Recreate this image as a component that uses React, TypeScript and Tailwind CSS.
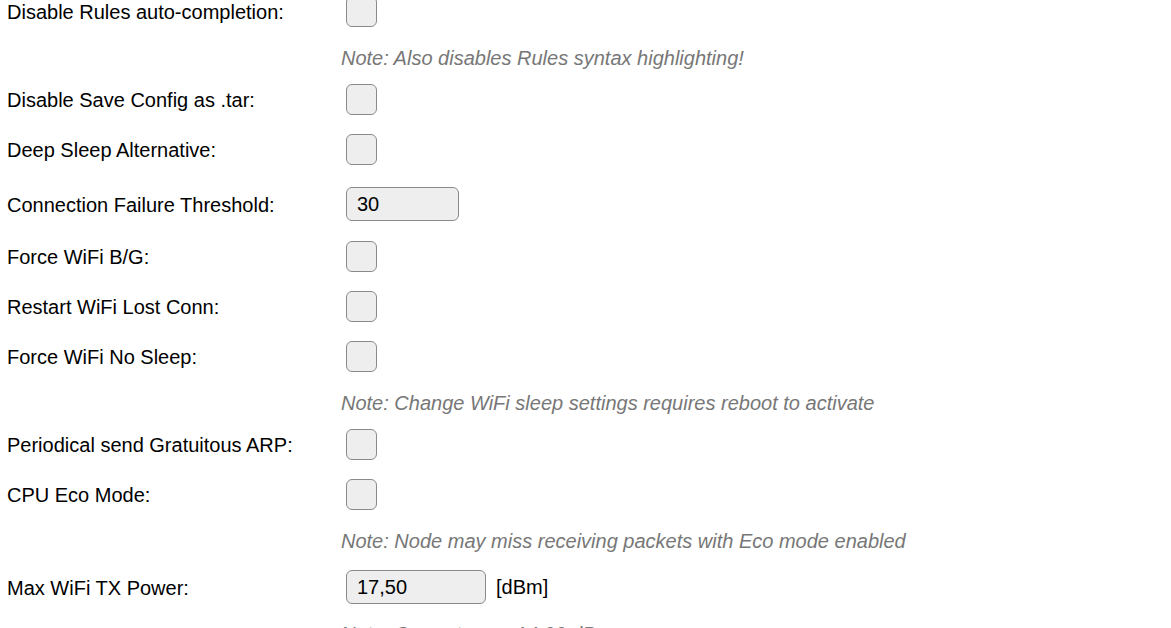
import React from "react";

type Row =
  | { kind: "check"; label: string }
  | { kind: "note"; text: string; tight?: boolean }
  | { kind: "input"; label: string; value: string; width: string; unit?: string };

const rows: Row[] = [
  { kind: "check", label: "Disable Rules auto-completion:" },
  { kind: "note", text: "Note: Also disables Rules syntax highlighting!" },
  { kind: "check", label: "Disable Save Config as .tar:" },
  { kind: "check", label: "Deep Sleep Alternative:" },
  { kind: "input", label: "Connection Failure Threshold:", value: "30", width: "w-[113px]" },
  { kind: "check", label: "Force WiFi B/G:" },
  { kind: "check", label: "Restart WiFi Lost Conn:" },
  { kind: "check", label: "Force WiFi No Sleep:" },
  { kind: "note", text: "Note: Change WiFi sleep settings requires reboot to activate" },
  { kind: "check", label: "Periodical send Gratuitous ARP:" },
  { kind: "check", label: "CPU Eco Mode:" },
  { kind: "note", text: "Note: Node may miss receiving packets with Eco mode enabled" },
  { kind: "input", label: "Max WiFi TX Power:", value: "17,50", width: "w-[140px]", unit: "[dBm]" },
  { kind: "note", text: "Note: Current max: 14.00 dBm", tight: true },
];

const Checkbox = () => (
  <span className="block w-[31px] h-[31px] ml-[5px] -mt-[2px] rounded-[6px] border border-[#8a8a8a] bg-[#eeeeee]" />
);

export default function App() {
  return (
    <div className="w-[1171px] h-[628px] overflow-hidden bg-white text-[20px] text-black font-['Liberation_Sans',Arial,sans-serif]">
      <div className="-mt-[13px]">
        {rows.map((r, i) => {
          if (r.kind === "note") {
            return (
              <div key={i} className="h-[38px] flex">
                <div className="w-[341px] shrink-0" />
                <div className={`${r.tight ? "pt-[6px]" : "pt-[8px]"} leading-[26px] italic text-[#777777]`}>
                  {r.text}
                </div>
              </div>
            );
          }
          if (r.kind === "input") {
            return (
              <div key={i} className="h-[57px] pt-[3px] flex items-center">
                <div className="w-[341px] shrink-0 pl-[7px] leading-[26px]">{r.label}</div>
                <div className="flex items-center">
                  <div
                    className={`${r.width} h-[34px] ml-[5px] -mt-[2px] rounded-[6px] border border-[#8a8a8a] bg-[#eeeeee] pl-[10px] flex items-center leading-[26px]`}
                  >
                    {r.value}
                  </div>
                  {r.unit && <span className="ml-[10px] -mt-[2px]">{r.unit}</span>}
                </div>
              </div>
            );
          }
          return (
            <div key={i} className="h-[50px] flex items-center">
              <div className="w-[341px] shrink-0 pl-[7px] leading-[26px]">{r.label}</div>
              <Checkbox />
            </div>
          );
        })}
      </div>
    </div>
  );
}
